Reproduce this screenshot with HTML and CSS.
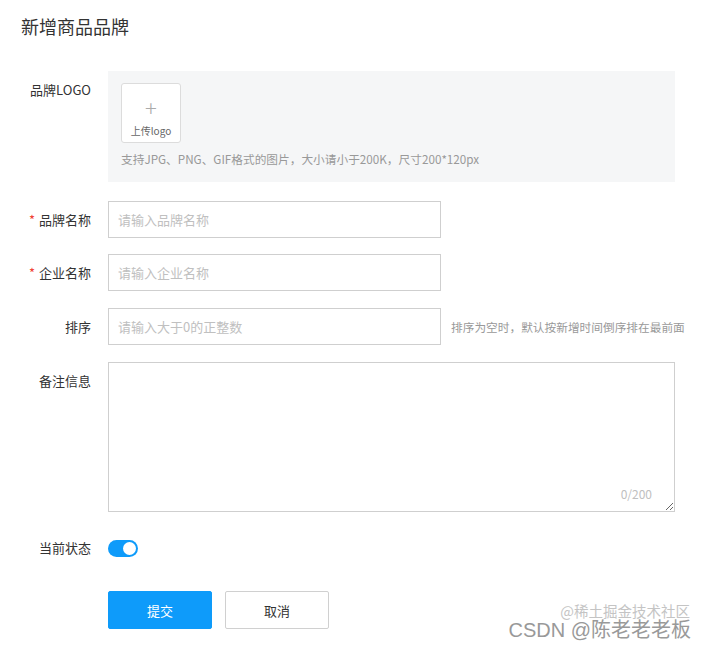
FILE: index.html
```html
<!DOCTYPE html>
<html lang="zh-CN">
<head>
<meta charset="utf-8">
<title>新增商品品牌</title>
<link rel="stylesheet" href="styles.css">
</head>
<body>
<div class="page">
  <h1 class="title">新增商品品牌</h1>
  <form class="form">
    <div class="row row-logo">
      <div class="label">品牌LOGO</div>
      <div class="logo-box">
        <div class="upload">
          <span class="plus">+</span>
          <span class="upload-text">上传logo</span>
        </div>
        <div class="logo-hint">支持JPG、PNG、GIF格式的图片，大小请小于200K，尺寸200*120px</div>
      </div>
    </div>
    <div class="row row-first">
      <div class="label"><span class="req">*</span>品牌名称</div>
      <input class="input" type="text" placeholder="请输入品牌名称">
    </div>
    <div class="row">
      <div class="label"><span class="req">*</span>企业名称</div>
      <input class="input" type="text" placeholder="请输入企业名称">
    </div>
    <div class="row">
      <div class="label">排序</div>
      <input class="input" type="text" placeholder="请输入大于0的正整数">
      <div class="hint">排序为空时，默认按新增时间倒序排在最前面</div>
    </div>
    <div class="row">
      <div class="label">备注信息</div>
      <div class="textarea-wrap">
        <textarea class="textarea"></textarea>
        <span class="counter">0/200</span>
      </div>
    </div>
    <div class="row">
      <div class="label">当前状态</div>
      <div class="switch-cell"><span class="switch"><span class="knob"></span></span></div>
    </div>
    <div class="row row-actions">
      <div class="label"></div>
      <button type="button" class="btn btn-primary">提交</button>
      <button type="button" class="btn">取消</button>
    </div>
  </form>
  <div class="watermark">
    <span class="wm-1">@稀土掘金技术社区</span>
    <span class="wm-2">CSDN @陈老老老板</span>
  </div>
</div>
</body>
</html>
```
FILE: styles.css
```css
* { box-sizing: border-box; }
html, body {
  margin: 0;
  padding: 0;
  background: #fff;
}
body {
  font-family: "Noto Sans CJK SC", "Noto Sans", sans-serif;
  color: #333;
  font-size: 13px;
}
.page {
  position: relative;
  width: 707px;
  height: 649px;
  overflow: hidden;
}
.title {
  margin: 0;
  padding: 14px 0 0 21px;
  font-size: 18px;
  line-height: 24px;
  font-weight: 400;
  color: #333;
}
.form {
  margin-top: 33px;
}
.row {
  display: flex;
  align-items: flex-start;
  margin-bottom: 17px;
}
.row-logo { margin-bottom: 19px; }
.row-first { margin-bottom: 16px; }
.label {
  width: 91px;
  flex-shrink: 0;
  margin-right: 17px;
  text-align: right;
  line-height: 37px;
  font-size: 13px;
  color: #333;
}
.req {
  color: #f04134;
  margin-right: 4px;
}
.logo-box {
  width: 567px;
  background: #f5f6f7;
  padding: 12px 13px 14px;
}
.upload {
  width: 60px;
  height: 60px;
  background: #fff;
  border: 1px solid #dcdcdc;
  border-radius: 3px;
  display: flex;
  flex-direction: column;
  align-items: center;
}
.plus {
  font-size: 22px;
  line-height: 22px;
  margin-top: 12px;
  color: #aaa;
  font-weight: 300;
}
.upload-text {
  font-size: 10px;
  line-height: 14px;
  margin-top: 6px;
  color: #666;
}
.logo-hint {
  margin-top: 7px;
  font-size: 11.7px;
  line-height: 18px;
  color: #999;
  white-space: nowrap;
}
.input {
  width: 333px;
  height: 37px;
  border: 1px solid #cfcfcf;
  border-radius: 0;
  padding: 0 9px;
  font-family: inherit;
  font-size: 13px;
  color: #333;
  outline: none;
  margin: 0;
}
.input::placeholder { color: #c0c0c0; }
.hint {
  margin-left: 10px;
  line-height: 37px;
  font-size: 11.7px;
  color: #999;
  white-space: nowrap;
}
.textarea-wrap {
  position: relative;
  width: 567px;
  height: 150px;
}
.textarea {
  display: block;
  width: 567px;
  height: 150px;
  border: 1px solid #cfcfcf;
  border-radius: 0;
  padding: 8px 10px;
  font-family: inherit;
  font-size: 13px;
  outline: none;
  margin: 0;
}
.counter {
  position: absolute;
  right: 23px;
  bottom: 10px;
  font-size: 12px;
  color: #c0c0c0;
  line-height: 16px;
}
.switch-cell {
  height: 37px;
  display: flex;
  align-items: center;
  padding-top: 1px;
}
.switch {
  display: flex;
  align-items: center;
  justify-content: flex-end;
  width: 30px;
  height: 17px;
  border-radius: 9px;
  background: #0e9bfa;
  padding: 2px;
}
.knob {
  width: 13px;
  height: 13px;
  border-radius: 50%;
  background: #fff;
}
.row-actions {
  margin-top: 25px;
}
.btn {
  width: 104px;
  height: 38px;
  border: 1px solid #d0d0d0;
  border-radius: 2px;
  background: #fff;
  color: #333;
  font-family: inherit;
  font-size: 13px;
  margin: 0 13px 0 0;
  padding: 0;
}
.btn-primary {
  background: #0e9bfa;
  border-color: #0e9bfa;
  color: #fff;
}
.watermark {
  position: absolute;
  right: 16px;
  bottom: 8px;
  width: 190px;
  height: 40px;
  pointer-events: none;
}
.wm-1 {
  position: absolute;
  right: 1px;
  top: 0;
  font-size: 14.5px;
  line-height: 20px;
  color: #c4c4c4;
  white-space: nowrap;
}
.wm-2 {
  position: absolute;
  right: 0;
  bottom: 0;
  font-family: "Liberation Sans", "Noto Sans CJK SC", sans-serif;
  font-size: 20px;
  line-height: 22px;
  color: #999;
  white-space: nowrap;
}
```
